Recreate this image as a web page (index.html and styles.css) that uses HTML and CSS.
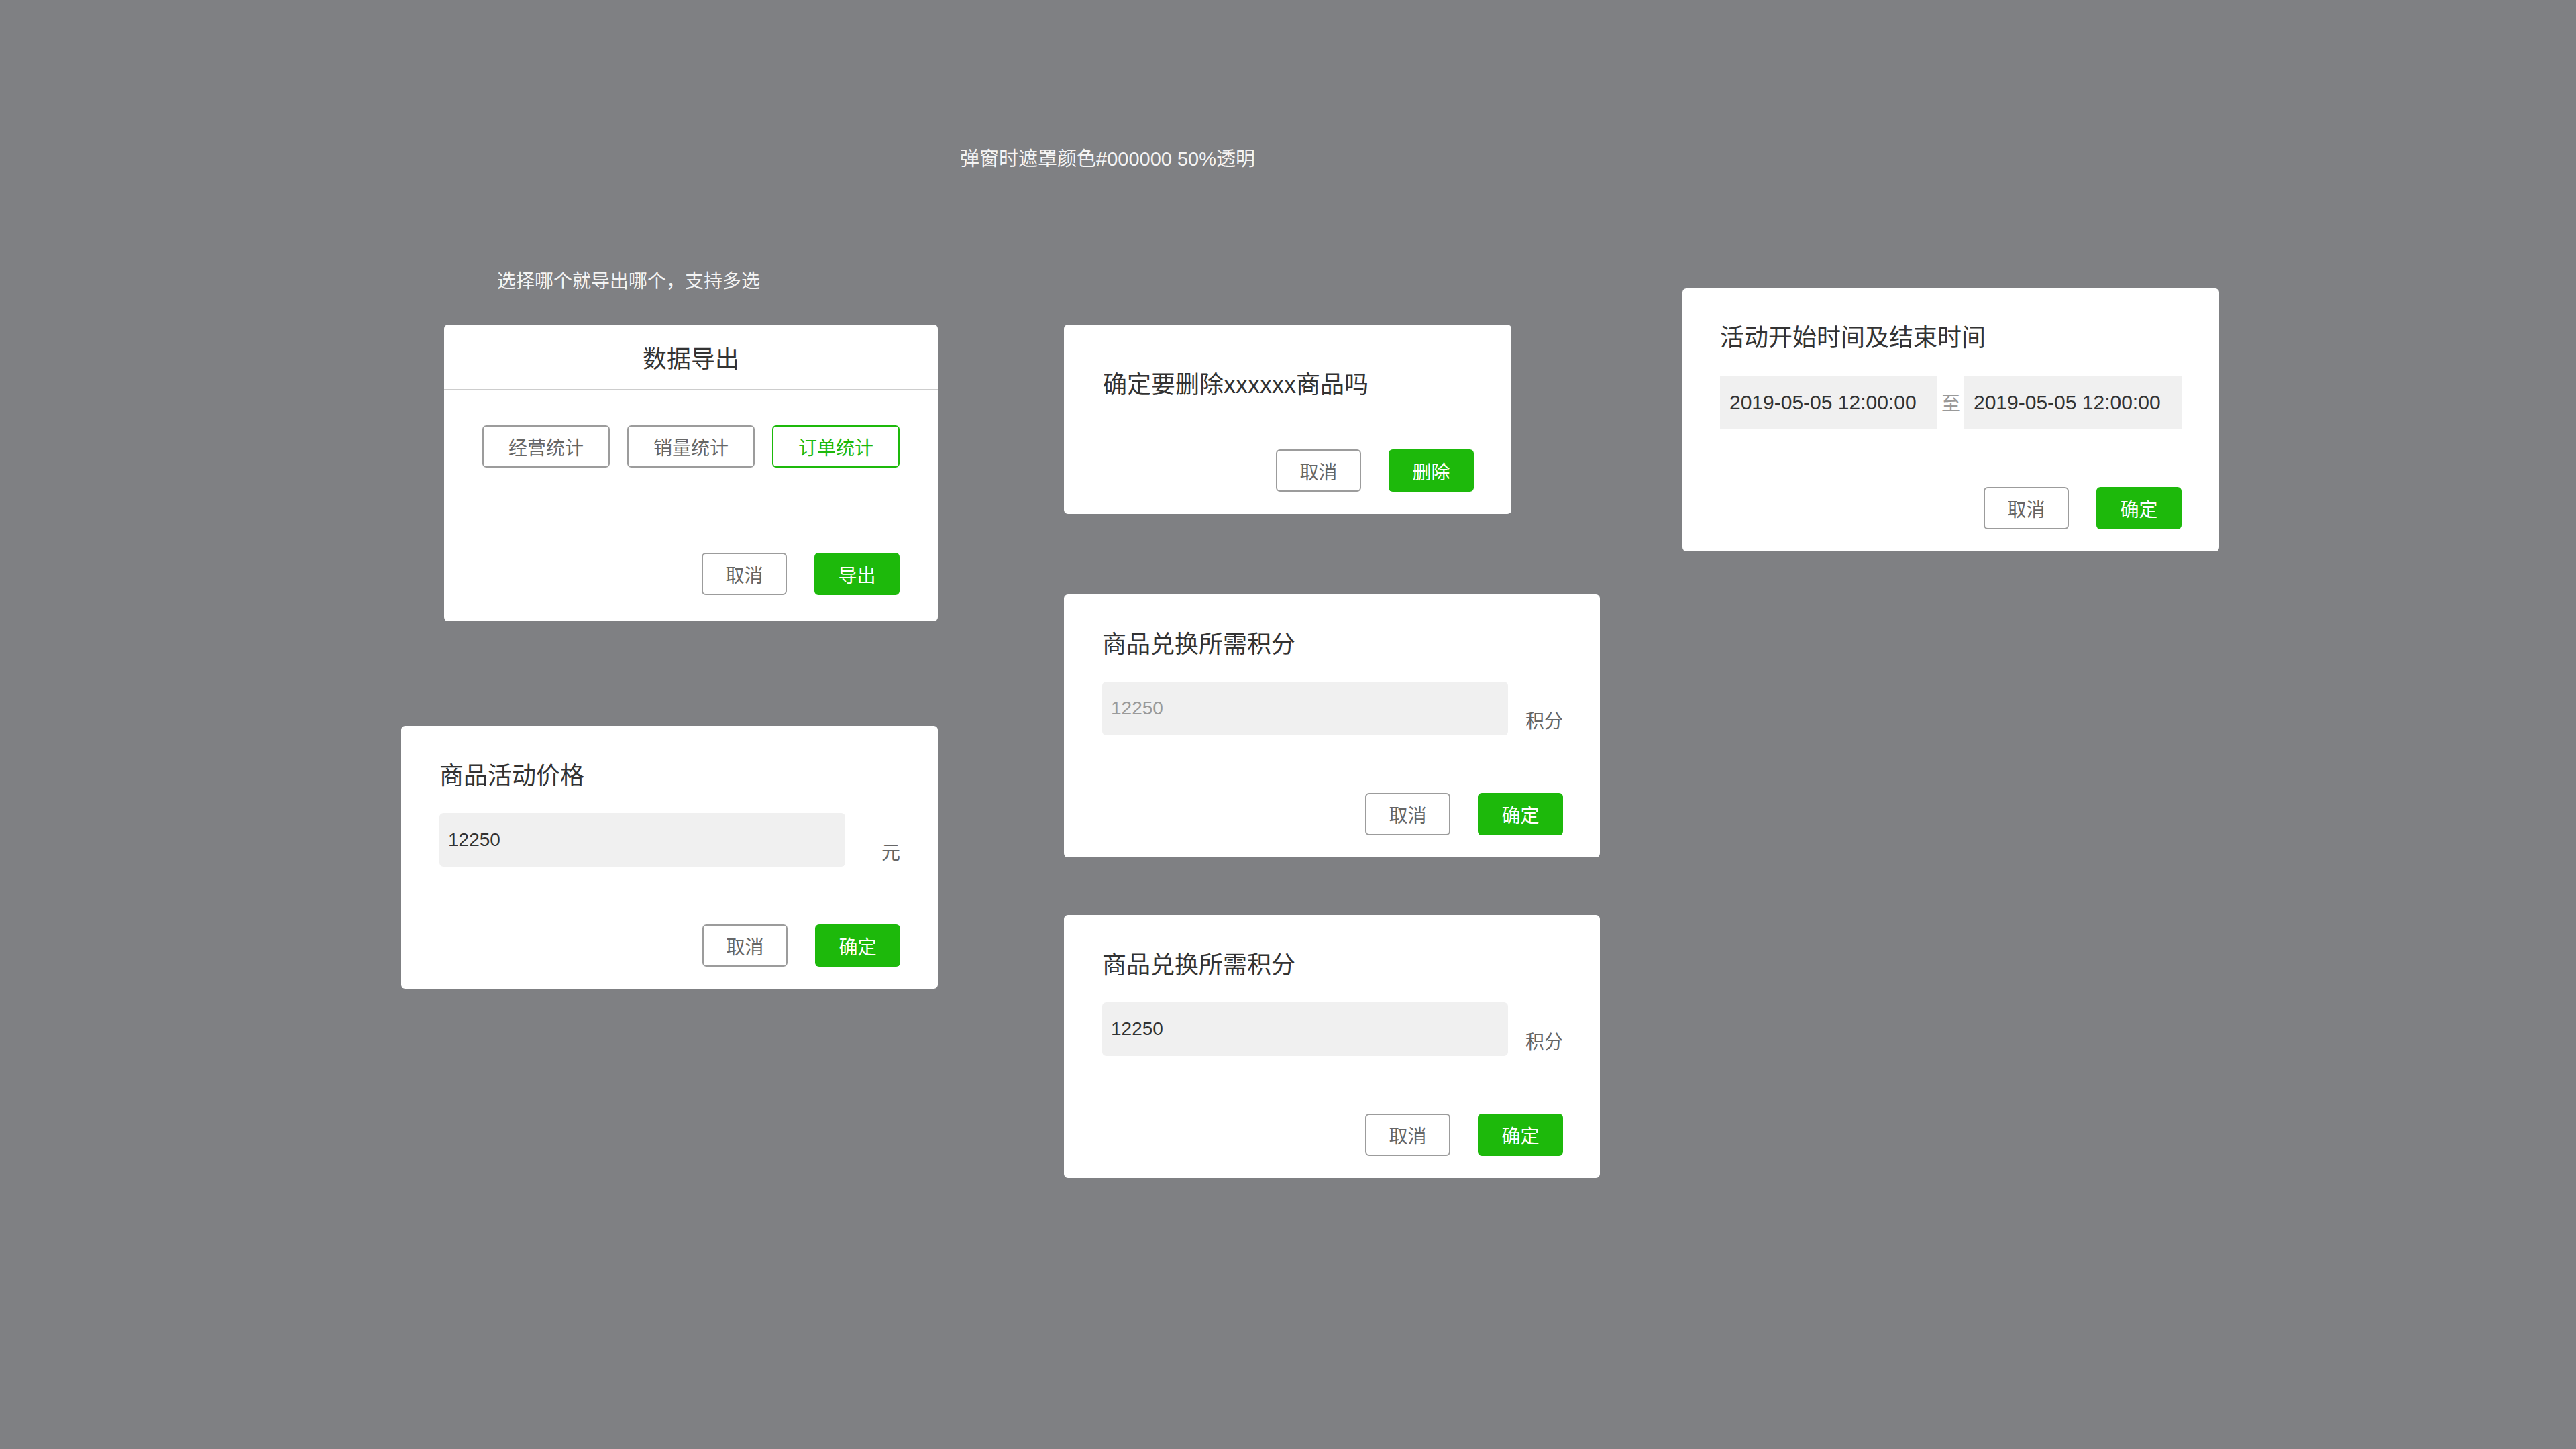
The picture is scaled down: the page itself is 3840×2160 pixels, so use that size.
FILE: index.html
```html
<!DOCTYPE html>
<html lang="zh-CN">
<head>
<meta charset="utf-8">
<title>弹窗样式</title>
<link rel="stylesheet" href="styles.css">
</head>
<body>
<div class="board">
  <p class="note note-top">弹窗时遮罩颜色#000000 50%透明</p>
  <div class="columns">
    <div class="col col-1">
      <p class="note note-side">选择哪个就导出哪个，支持多选</p>
      <section class="dialog dialog-export">
        <header class="export-head">数据导出</header>
        <div class="export-body">
          <div class="options">
            <button class="opt">经营统计</button>
            <button class="opt">销量统计</button>
            <button class="opt opt-on">订单统计</button>
          </div>
          <div class="actions actions-export">
            <button class="btn btn-cancel">取消</button>
            <button class="btn btn-primary">导出</button>
          </div>
        </div>
      </section>
      <section class="dialog dialog-form dialog-price">
        <h2 class="dialog-title">商品活动价格</h2>
        <div class="field-row">
          <div class="field">12250</div>
          <span class="unit">元</span>
        </div>
        <div class="actions">
          <button class="btn btn-cancel">取消</button>
          <button class="btn btn-primary">确定</button>
        </div>
      </section>
    </div>

    <div class="col col-2">
      <section class="dialog dialog-delete">
        <h2 class="dialog-title">确定要删除xxxxxx商品吗</h2>
        <div class="actions actions-delete">
          <button class="btn btn-cancel">取消</button>
          <button class="btn btn-primary">删除</button>
        </div>
      </section>
      <section class="dialog dialog-form dialog-points-a">
        <h2 class="dialog-title">商品兑换所需积分</h2>
        <div class="field-row">
          <div class="field field-placeholder">12250</div>
          <span class="unit">积分</span>
        </div>
        <div class="actions">
          <button class="btn btn-cancel">取消</button>
          <button class="btn btn-primary">确定</button>
        </div>
      </section>
      <section class="dialog dialog-form dialog-points-b">
        <h2 class="dialog-title">商品兑换所需积分</h2>
        <div class="field-row">
          <div class="field">12250</div>
          <span class="unit">积分</span>
        </div>
        <div class="actions">
          <button class="btn btn-cancel">取消</button>
          <button class="btn btn-primary">确定</button>
        </div>
      </section>
    </div>

    <div class="col col-3">
      <section class="dialog dialog-form dialog-time">
        <h2 class="dialog-title">活动开始时间及结束时间</h2>
        <div class="date-row">
          <div class="date-field">2019-05-05 12:00:00</div>
          <span class="date-sep">至</span>
          <div class="date-field">2019-05-05 12:00:00</div>
        </div>
        <div class="actions">
          <button class="btn btn-cancel">取消</button>
          <button class="btn btn-primary">确定</button>
        </div>
      </section>
    </div>
  </div>
</div>
</body>
</html>
```

FILE: styles.css
```css
* {
  box-sizing: border-box;
}

html,
body {
  margin: 0;
  padding: 0;
}

body {
  width: 3840px;
  height: 2160px;
  overflow: hidden;
  background: #7f8083;
  font-family: "Liberation Sans", "Noto Sans CJK SC", sans-serif;
  color: #333;
}

.board {
  padding-top: 217px;
}

.note {
  margin: 0;
  color: #f4f4f4;
  white-space: nowrap;
}

.note-top {
  margin-left: 1431px;
  font-size: 29px;
  line-height: 40px;
}

.note-side {
  align-self: flex-start;
  margin-top: 2px;
  margin-left: 143px;
  font-size: 28px;
  line-height: 36px;
}

.columns {
  display: flex;
  align-items: flex-start;
  margin-top: 143px;
}

.col {
  display: flex;
  flex-direction: column;
}

.col-1 {
  width: 800px;
  margin-left: 598px;
  align-items: flex-end;
}

.col-2 {
  width: 799px;
  margin-left: 188px;
  align-items: flex-start;
}

.col-3 {
  width: 800px;
  margin-left: 123px;
}

/* dialogs */
.dialog {
  background: #fff;
  border-radius: 6px;
}

.dialog-title {
  margin: 0;
  font-size: 36px;
  line-height: 50px;
  font-weight: normal;
  color: #333;
  white-space: nowrap;
}

/* export dialog */
.dialog-export {
  width: 736px;
  height: 442px;
  margin-top: 46px;
}

.export-head {
  height: 98px;
  border-bottom: 2px solid #cdcdcd;
  display: flex;
  align-items: center;
  justify-content: center;
  font-size: 36px;
  color: #333;
}

.export-body {
  padding: 52px 57px 39px 57px;
}

.options {
  display: flex;
  gap: 26px;
}

.opt {
  width: 190px;
  height: 63px;
  padding: 0;
  border: 2px solid #9c9c9c;
  border-radius: 6px;
  background: #fff;
  color: #666;
  font-family: inherit;
  font-size: 28px;
}

.opt-on {
  border-color: #1db90b;
  color: #1db90b;
}

/* action buttons */
.actions {
  display: flex;
  justify-content: flex-end;
  gap: 41px;
  margin-top: 86px;
}

.actions-export {
  margin-top: 127px;
}

.actions-delete {
  margin-top: 71px;
}

.btn {
  width: 127px;
  height: 63px;
  padding: 0;
  border-radius: 6px;
  font-family: inherit;
  font-size: 28px;
}

.btn-cancel {
  border: 2px solid #9c9c9c;
  background: #fff;
  color: #666;
}

.btn-primary {
  border: none;
  background: #1db90b;
  color: #fff;
}

/* form dialogs */
.dialog-form {
  width: 800px;
  height: 392px;
  padding: 50px 56px 33px 57px;
}

.dialog-price {
  margin-top: 156px;
}

.dialog-delete {
  width: 667px;
  height: 282px;
  margin-top: 84px;
  padding: 65px 56px 33px 58px;
}

.dialog-points-a {
  width: 799px;
  margin-top: 120px;
  padding-right: 55px;
}

.dialog-points-b {
  width: 799px;
  margin-top: 86px;
  padding-right: 55px;
}

.field-row {
  display: flex;
  align-items: flex-end;
  margin-top: 30px;
}

.field {
  width: 605px;
  height: 80px;
  padding-left: 13px;
  display: flex;
  align-items: center;
  background: #f0f0f0;
  border-radius: 6px;
  font-size: 28px;
  color: #333;
}

.field-placeholder {
  color: #9a9a9a;
}

.unit {
  margin-left: auto;
  font-size: 28px;
  line-height: 40px;
  color: #666;
}

/* time dialog */
.dialog-time {
  margin-top: 30px;
  padding: 49px 56px 33px 56px;
}

.date-row {
  display: flex;
  align-items: center;
  margin-top: 31px;
}

.date-field {
  width: 324px;
  height: 80px;
  padding-left: 14px;
  display: flex;
  align-items: center;
  background: #f0f0f0;
  font-size: 30px;
  color: #333;
  white-space: nowrap;
}

.date-sep {
  width: 40px;
  text-align: center;
  font-size: 28px;
  color: #999;
}
```
